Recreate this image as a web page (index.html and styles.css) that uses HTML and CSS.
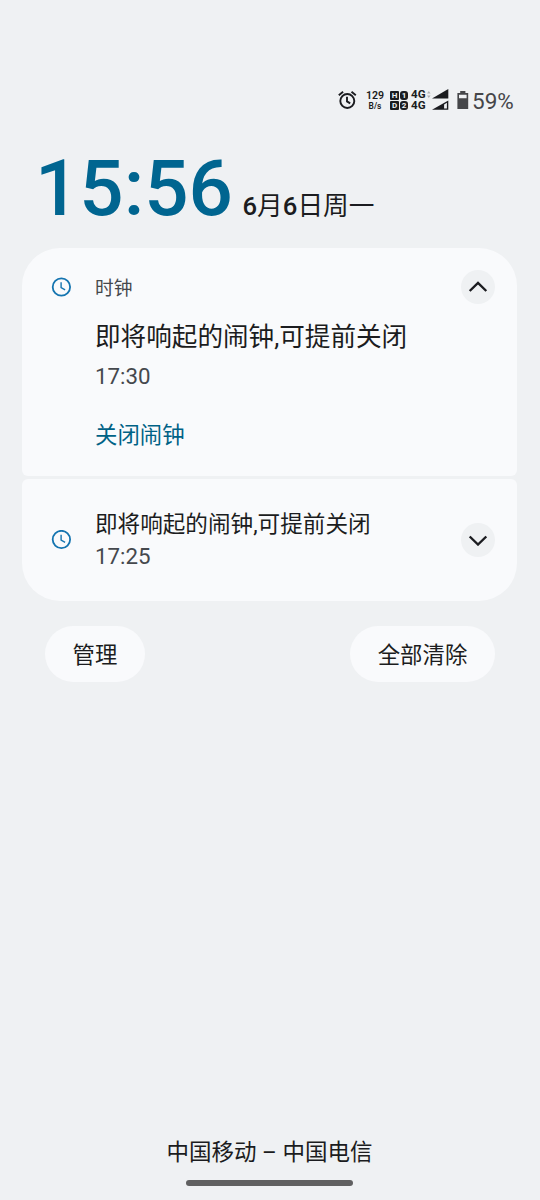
FILE: index.html
```html
<!DOCTYPE html>
<html lang="zh-CN">
<head>
<meta charset="utf-8">
<title>通知</title>
<link rel="stylesheet" href="styles.css">
</head>
<body>
<main class="screen">
  <div class="status">
    <svg class="alarm" width="20" height="20" viewBox="0 0 20 20" fill="none" stroke="#1b1c20" stroke-width="1.9"><circle cx="10.3" cy="11" r="7"/><path d="M10 6.8v4.6l3.2 2M1.8 5.3 6.1 1.8M14.5 1.8l4.3 3.5"/></svg>
    <div class="speed"><span class="speed-num">129</span><span class="speed-unit">B/s</span></div>
    <div class="hd"><span>H</span><span class="dot">1</span><span>D</span><span class="dot">2</span></div>
    <div class="net"><span>4G</span><span>4G</span></div>
    <svg class="signal" width="22" height="22" viewBox="0 0 22 22"><g fill="#b2b3b5"><path d="M0 4.5 1.8 2l1.8 2.5zM0 6.5h3.6L1.8 9z"/></g><g fill="#1b1c20"><path d="M5 9.5 21.3 0v9.5z"/><path fill-rule="evenodd" d="M5 20.8 21.3 11.5v9.3zM17.1 15.6v4h2.8v-5.8z"/></g></svg>
    <svg class="battery" width="12" height="18" viewBox="0 0 12 18"><path fill="#454649" fill-rule="evenodd" d="M3.2 0h5.2v2h2.8v16H.4V2h2.8zM2 3.7v3.5h7.6V3.7z"/></svg>
    <span class="percent">59%</span>
  </div>
  <header class="heading"><span class="time">15:56</span><span class="date"><b>6</b>月<b>6</b>日周一</span></header>
  <section class="cards">
    <article class="card expanded">
      <svg class="clock" width="20" height="20" viewBox="0 0 20 20" fill="none" stroke="#1474b0" stroke-width="1.8"><circle cx="10.4" cy="10" r="8.7"/><path stroke-width="1.4" d="M10.1 5.3v5.2l4 2.3"/></svg>
      <div class="content">
        <div class="app">时钟</div>
        <div class="title large">即将响起的闹钟,可提前关闭</div>
        <div class="detail">17:30</div>
        <div class="action">关闭闹钟</div>
      </div>
      <div class="toggle"><svg width="20" height="12" viewBox="0 0 20 12"><path d="m1.7 10 8.3-8 8.3 8"/></svg></div>
    </article>
    <article class="card collapsed">
      <svg class="clock" width="20" height="20" viewBox="0 0 20 20" fill="none" stroke="#1474b0" stroke-width="1.8"><circle cx="10.4" cy="9.5" r="8.7"/><path stroke-width="1.4" d="M10.1 4.8v5.2l4 2.3"/></svg>
      <div class="content">
        <div class="title">即将响起的闹钟,可提前关闭</div>
        <div class="detail">17:25</div>
      </div>
      <div class="toggle"><svg width="20" height="12" viewBox="0 0 20 12"><path d="m1.7 2.5 8.3 8 8.3-8"/></svg></div>
    </article>
  </section>
  <div class="buttons"><div class="pill">管理</div><div class="pill wide">全部清除</div></div>
  <footer class="footer"><div class="carrier">中国移动 – 中国电信</div><div class="home"></div></footer>
</main>
</body>
</html>
```
FILE: styles.css
```css
* { box-sizing: border-box; }
body { margin: 0; background: #eff1f3; color: #1b1c20; font-family: Roboto, "Noto Sans CJK SC", sans-serif; }
.screen { display: flex; flex-direction: column; width: 540px; height: 1200px; padding-top: 88px; overflow: hidden; white-space: nowrap; }
.status { display: flex; align-items: center; height: 24px; padding-left: 337px; }
.alarm { margin: 0 8px 1px 0; }
.speed { display: flex; flex-direction: column; align-items: center; width: 20px; padding-top: 2px; font-weight: 600; }
.speed-num { font-size: 10.6px; line-height: 10px; }
.speed-unit { font-size: 8.4px; line-height: 10px; }
.hd { display: grid; grid-template-columns: 9px 8px; gap: 1px; margin-left: 5px; }
.hd span { height: 9px; border-radius: 1px; background: #1b1c20; color: #eff1f3; font-size: 8px; font-weight: 700; line-height: 9px; text-align: center; }
.hd .dot { border-radius: 3px; }
.net { display: flex; flex-direction: column; gap: 1px; width: 16px; margin-left: 3px; padding-bottom: 1px; font-size: 11.6px; font-weight: 700; line-height: 10px; }
.battery { margin-left: 8px; }
.percent { margin-left: 3px; padding-top: 2px; color: #454649; font-size: 22.5px; line-height: 24px; }
.heading { display: flex; align-items: baseline; height: 136px; padding: 31px 0 0 35px; }
.time { color: #006590; font-size: 78px; font-weight: 500; line-height: 92px; }
.date { margin-left: 9.6px; font-size: 25.7px; font-weight: 400; }
.date b { font-weight: 500; }
.cards { display: flex; flex-direction: column; gap: 3px; margin: 0 23px 0 22px; }
.card { display: flex; background: #f9fafc; padding: 0 22px 0 29px; }
.expanded { height: 228px; border-radius: 38px 38px 6px 6px; }
.collapsed { height: 122px; border-radius: 6px 6px 38px 38px; }
.clock { flex: none; margin-top: 29px; }
.collapsed .clock { margin-top: 51px; }
.content { flex: 1; margin-left: 24px; }
.app { margin-top: 27px; color: #45484d; font-size: 18.75px; line-height: 28px; }
.title { margin-top: 29px; font-size: 22.6px; line-height: 34px; }
.title.large { margin-top: 15px; font-size: 25.6px; line-height: 38px; }
.detail { margin-top: -2px; color: #45484d; font-size: 22.3px; line-height: 32px; }
.expanded .detail { margin-top: 4px; }
.action { margin-top: 26px; color: #006286; font-size: 22.4px; line-height: 34px; }
.toggle { display: flex; justify-content: center; align-items: center; width: 34px; height: 34px; margin-top: 22px; border-radius: 50%; background: #eff1f3; }
.toggle svg { fill: none; stroke: #1b1c20; stroke-width: 2.4; }
.collapsed .toggle { margin-top: 44px; }
.buttons { display: flex; justify-content: space-between; padding: 25px 45px 0; }
.pill { width: 100px; height: 56px; border-radius: 28px; background: #f9fafc; font-size: 22.4px; line-height: 58px; text-align: center; }
.pill.wide { width: 145px; }
.footer { display: flex; flex-direction: column; align-items: center; margin-top: auto; padding: 0 1px 14px 0; }
.carrier { font-size: 22.5px; line-height: 34px; }
.home { width: 167px; height: 6px; margin-top: 11px; border-radius: 3px; background: #606061; }
```
